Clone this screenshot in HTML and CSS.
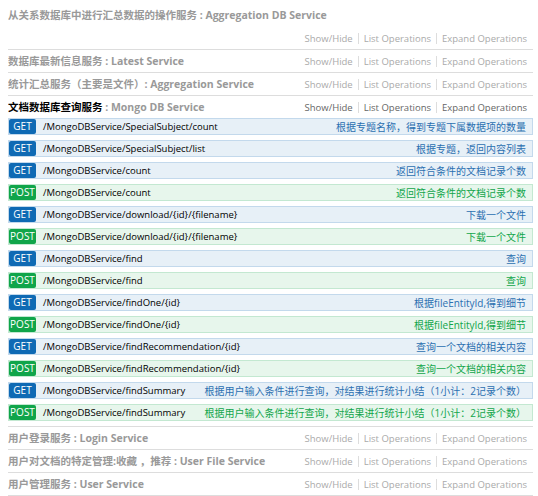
FILE: index.html
```html
<!DOCTYPE html>
<html lang="zh">
<head>
  <meta charset="UTF-8" />
  <title>Swagger UI</title>
  <link rel="stylesheet" href="styles.css">
</head>
<body>
  <ul class="resources">
    <li class="resource">
      <div class="heading">
        <h2>从关系数据库中进行汇总数据的操作服务 : Aggregation DB Service</h2>
        <ul class="options">
          <li>Show/Hide</li>
          <li>List Operations</li>
          <li>Expand Operations</li>
        </ul>
      </div>
    </li>
    <li class="resource">
      <div class="heading">
        <h2>数据库最新信息服务 : Latest Service</h2>
        <ul class="options">
          <li>Show/Hide</li>
          <li>List Operations</li>
          <li>Expand Operations</li>
        </ul>
      </div>
    </li>
    <li class="resource">
      <div class="heading">
        <h2>统计汇总服务（主要是文件）: Aggregation Service</h2>
        <ul class="options">
          <li>Show/Hide</li>
          <li>List Operations</li>
          <li>Expand Operations</li>
        </ul>
      </div>
    </li>
    <li class="resource active">
      <div class="heading">
        <h2><span class="name">文档数据库查询服务</span> : Mongo DB Service</h2>
        <ul class="options">
          <li>Show/Hide</li>
          <li>List Operations</li>
          <li>Expand Operations</li>
        </ul>
      </div>
      <ul class="endpoints">
        <li class="op get"><span class="method">GET</span><span class="path">/MongoDBService/SpecialSubject/count</span><span class="desc">根据专题名称，得到专题下属数据项的数量</span></li>
        <li class="op get"><span class="method">GET</span><span class="path">/MongoDBService/SpecialSubject/list</span><span class="desc">根据专题，返回内容列表</span></li>
        <li class="op get"><span class="method">GET</span><span class="path">/MongoDBService/count</span><span class="desc">返回符合条件的文档记录个数</span></li>
        <li class="op post"><span class="method">POST</span><span class="path">/MongoDBService/count</span><span class="desc">返回符合条件的文档记录个数</span></li>
        <li class="op get"><span class="method">GET</span><span class="path">/MongoDBService/download/{id}/{filename}</span><span class="desc">下载一个文件</span></li>
        <li class="op post"><span class="method">POST</span><span class="path">/MongoDBService/download/{id}/{filename}</span><span class="desc">下载一个文件</span></li>
        <li class="op get"><span class="method">GET</span><span class="path">/MongoDBService/find</span><span class="desc">查询</span></li>
        <li class="op post"><span class="method">POST</span><span class="path">/MongoDBService/find</span><span class="desc">查询</span></li>
        <li class="op get"><span class="method">GET</span><span class="path">/MongoDBService/findOne/{id}</span><span class="desc">根据fileEntityId,得到细节</span></li>
        <li class="op post"><span class="method">POST</span><span class="path">/MongoDBService/findOne/{id}</span><span class="desc">根据fileEntityId,得到细节</span></li>
        <li class="op get"><span class="method">GET</span><span class="path">/MongoDBService/findRecommendation/{id}</span><span class="desc">查询一个文档的相关内容</span></li>
        <li class="op post"><span class="method">POST</span><span class="path">/MongoDBService/findRecommendation/{id}</span><span class="desc">查询一个文档的相关内容</span></li>
        <li class="op get"><span class="method">GET</span><span class="path">/MongoDBService/findSummary</span><span class="desc">根据用户输入条件进行查询，对结果进行统计小结（1小计：2记录个数）</span></li>
        <li class="op post"><span class="method">POST</span><span class="path">/MongoDBService/findSummary</span><span class="desc">根据用户输入条件进行查询，对结果进行统计小结（1小计：2记录个数）</span></li>
      </ul>
    </li>
    <li class="resource">
      <div class="heading">
        <h2>用户登录服务 : Login Service</h2>
        <ul class="options">
          <li>Show/Hide</li>
          <li>List Operations</li>
          <li>Expand Operations</li>
        </ul>
      </div>
    </li>
    <li class="resource">
      <div class="heading">
        <h2>用户对文档的特定管理:收藏 ，推荐 : User File Service</h2>
        <ul class="options">
          <li>Show/Hide</li>
          <li>List Operations</li>
          <li>Expand Operations</li>
        </ul>
      </div>
    </li>
    <li class="resource">
      <div class="heading">
        <h2>用户管理服务 : User Service</h2>
        <ul class="options">
          <li>Show/Hide</li>
          <li>List Operations</li>
          <li>Expand Operations</li>
        </ul>
      </div>
    </li>
  </ul>
</body>
</html>
```

FILE: styles.css
```css
body {
  margin: 5px 5px 0 8px;
  font-family: "Open Sans", "Noto Sans CJK SC", sans-serif;
  background: #fff;
  color: #000;
}
ul {
  list-style: none;
  margin: 0;
  padding: 0;
}
.resource {
  border-bottom: 1px solid #ddd;
}
.heading {
  display: flex;
  flex-wrap: wrap;
  align-items: center;
  min-height: 21px;
}
.heading h2 {
  margin: 0;
  font-size: 10.5px;
  font-weight: bold;
  line-height: 21px;
  color: #999;
  white-space: nowrap;
}
.options {
  display: flex;
  align-items: center;
  height: 22px;
  margin-left: auto;
  font-size: 9.5px;
  color: #aaa;
}
.options li {
  padding: 0 5px;
  line-height: 11px;
}
.options li:last-child {
  padding-right: 6px;
}
.options li + li {
  border-left: 1px solid #ddd;
}
.resource:first-child .options {
  margin-top: 1px;
}
.resource.active .options {
  color: #666;
}
.resource.active .name {
  color: #000;
}
.op {
  display: flex;
  align-items: center;
  height: 15px;
  margin-bottom: 5px;
  border: 1px solid;
  font-size: 9.5px;
  white-space: nowrap;
}
.op .method {
  align-self: stretch;
  width: 27px;
  font-size: 10px;
  line-height: 15px;
  text-align: center;
  color: #fff;
  border-radius: 2px;
}
.op .path {
  margin-left: 7px;
  color: #000;
}
.op .desc {
  margin-left: auto;
  padding-right: 6px;
  font-size: 10px;
}
.op.get {
  background: #e7f0f7;
  border-color: #c3d9ec;
}
.op.get .method {
  background: #0f6ab4;
}
.op.get .desc {
  color: #2a6fb0;
}
.op.post {
  background: #e7f6ec;
  border-color: #c3e8d1;
}
.op.post .method {
  background: #10a54a;
}
.op.post .desc {
  color: #10a54a;
}
```
